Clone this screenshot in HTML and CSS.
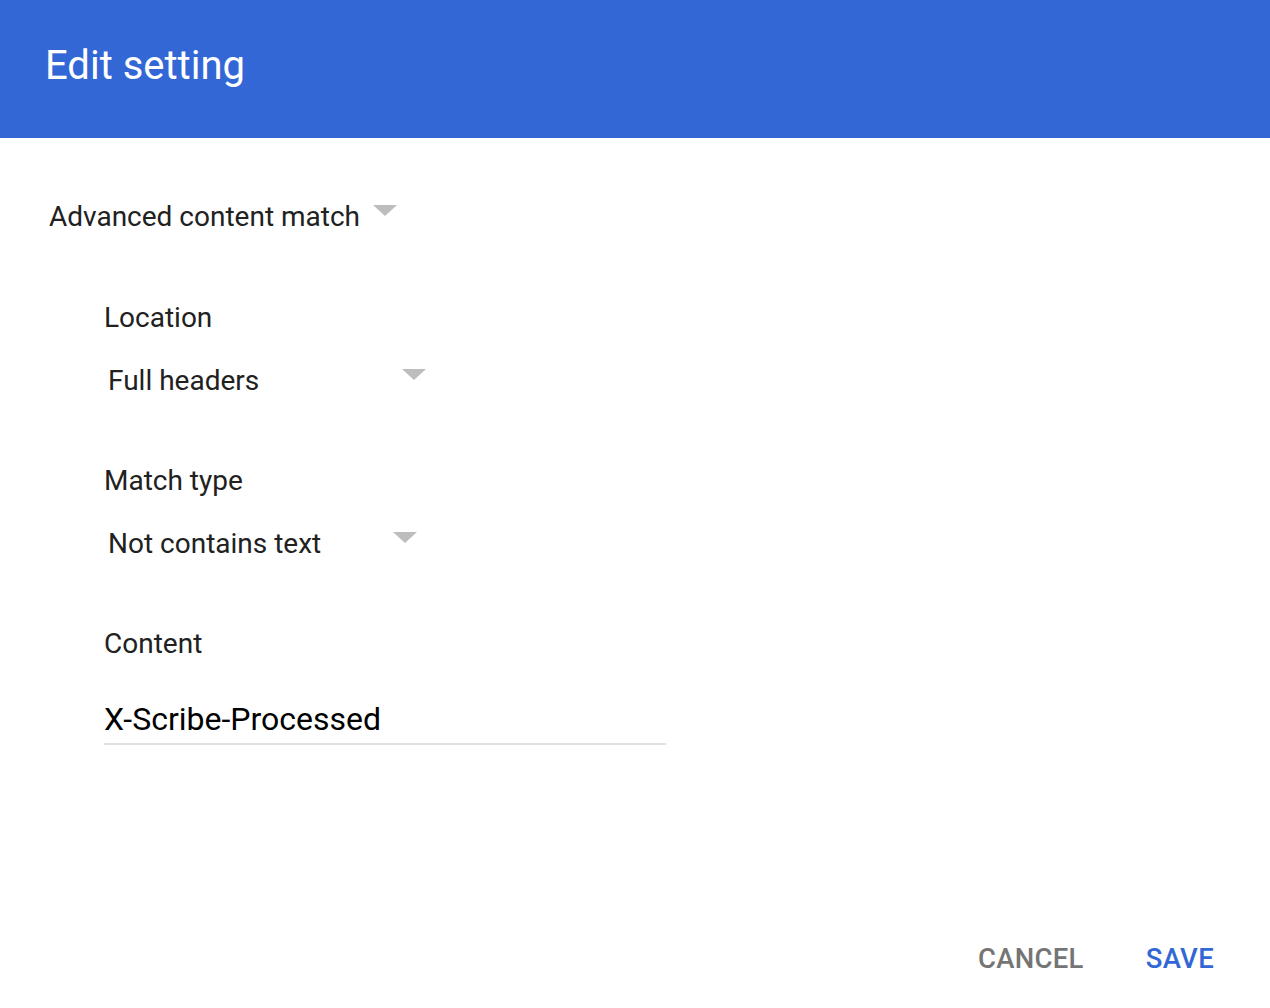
FILE: index.html
```html
<!DOCTYPE html>
<html lang="en">
<head>
  <meta charset="UTF-8" />
  <meta name="viewport" content="width=device-width, initial-scale=1.0"/>
  <title>Edit setting</title>
  <link rel="stylesheet" href="styles.css">
</head>
<body>

  <div class="dialog">
    <header class="dialog-title">Edit setting</header>

    <div class="dialog-body">
      <div class="select top-select">
        <span class="select-value">Advanced content match</span>
        <span class="caret"></span>
      </div>

      <div class="fields">
        <div class="field">
          <div class="field-label">Location</div>
          <div class="select field-select loc">
            <span class="select-value">Full headers</span>
            <span class="caret"></span>
          </div>
        </div>

        <div class="field">
          <div class="field-label">Match type</div>
          <div class="select field-select match">
            <span class="select-value">Not contains text</span>
            <span class="caret"></span>
          </div>
        </div>

        <div class="field">
          <div class="field-label">Content</div>
          <input class="text-input" type="text" value="X-Scribe-Processed">
        </div>
      </div>
    </div>

    <div class="dialog-actions">
      <button class="btn btn-cancel">Cancel</button>
      <button class="btn btn-save">Save</button>
    </div>
  </div>

</body>
</html>
```

FILE: styles.css
```css
body {
  margin: 0;
  font-family: Roboto, 'Liberation Sans', sans-serif;
  background: #fff;
  color: #212121;
}

.dialog {
  display: flex;
  flex-direction: column;
  height: 1008px;
}

.dialog-title {
  background: #3367d6;
  color: #fff;
  height: 138px;
  box-sizing: border-box;
  padding: 42px 0 0 45px;
  font-size: 40px;
  font-weight: 400;
  line-height: 48px;
}

.dialog-body {
  flex: 1;
  padding: 62px 0 0 49px;
}

.select {
  display: flex;
  align-items: flex-start;
  font-size: 28px;
  line-height: 34px;
}

.caret {
  width: 0;
  height: 0;
  border-left: 12px solid transparent;
  border-right: 12px solid transparent;
  border-top: 11px solid #bdbdbd;
  margin-top: 5px;
}

.top-select .caret {
  margin-left: 13px;
}

.fields {
  padding: 67px 0 0 55px;
}

.field {
  margin-bottom: 32px;
}

.field-label {
  font-size: 28px;
  line-height: 34px;
}

.field-select {
  padding: 29px 0 0 4px;
  height: 68px;
  box-sizing: content-box;
}

.loc {
  width: 318px;
  justify-content: space-between;
}

.match {
  width: 309px;
  justify-content: space-between;
}

.text-input {
  display: block;
  margin-top: 38px;
  width: 562px;
  box-sizing: border-box;
  border: none;
  border-bottom: 2px solid #e0e0e0;
  padding: 0 0 4px 0;
  font-family: inherit;
  font-size: 32px;
  line-height: 40px;
  color: #000;
  background: transparent;
  outline: none;
}

.dialog-actions {
  display: flex;
  justify-content: flex-end;
  gap: 62px;
  padding: 0 56px 33px 0;
}

.btn {
  border: none;
  background: none;
  padding: 0;
  font-family: inherit;
  font-size: 27.5px;
  font-weight: 500;
  text-transform: uppercase;
  letter-spacing: 0.3px;
  cursor: pointer;
}

.btn-cancel {
  color: #757575;
}

.btn-save {
  color: #3367d6;
}
```
